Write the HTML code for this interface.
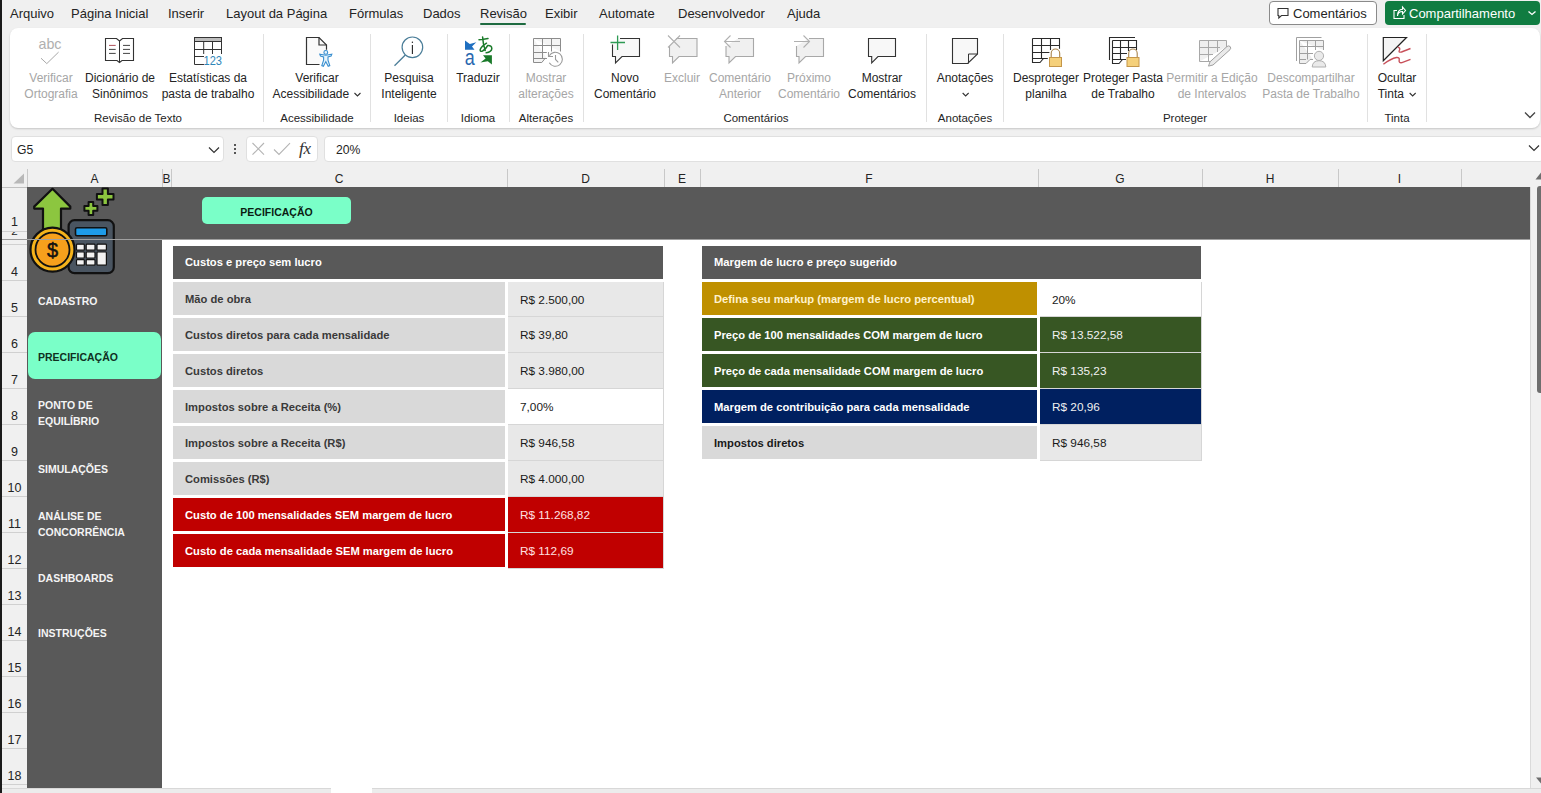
<!DOCTYPE html>
<html><head><meta charset="utf-8">
<style>
*{box-sizing:border-box;margin:0;padding:0}
html,body{width:1541px;height:793px;overflow:hidden;background:#f0f0f0;font-family:"Liberation Sans",sans-serif;position:relative}
.a{position:absolute}
.tab{position:absolute;top:6px;font-size:13px;color:#242424;white-space:nowrap}
#lb{left:0;top:0;width:2px;height:793px;background:#1a1a1a}
#ribbon{left:10px;top:28px;width:1530px;height:100px;background:#fff;border-radius:8px;box-shadow:0 1px 2px rgba(0,0,0,.18)}
.gl{position:absolute;top:112px;font-size:11.5px;color:#242424;white-space:nowrap;transform:translateX(-50%)}
.sep{position:absolute;top:34px;width:1px;height:88px;background:#e1e1e1}
.bt{position:absolute;top:70px;font-size:12px;line-height:16px;color:#242424;text-align:center;white-space:nowrap;transform:translateX(-50%)}
.dis{color:#a6a6a6}
.chev{display:inline-block;font-size:10px;transform:translateY(-3px)}
.ic{position:absolute;top:34px}
/* formula bar */
.fb{position:absolute;background:#fff;border:1px solid #e0e0e0;border-radius:4px}
/* headers */
.ch{position:absolute;top:170px;height:18px;font-size:12px;color:#242424;text-align:center;line-height:18px}
.chl{position:absolute;top:169px;width:1px;height:18px;background:#c8c8c8}
.rh{position:absolute;left:2px;width:25px;font-size:12px;color:#242424;text-align:center}
.rhl{position:absolute;left:2px;width:25px;height:1px;background:#c8c8c8}
.cell{position:absolute;font-weight:bold;font-size:11.2px;padding-left:12px;padding-top:1px;white-space:nowrap}
.val{position:absolute;font-size:11.8px;padding-left:12px;padding-top:0.5px;white-space:nowrap}
.nav{position:absolute;left:38px;font-size:10.5px;font-weight:bold;color:#f4f4f4;line-height:15.8px}
</style></head><body>
<div id="lb" class="a"></div>
<!-- tabs -->
<div class="tab" style="left:10px">Arquivo</div>
<div class="tab" style="left:71px">Página Inicial</div>
<div class="tab" style="left:168px">Inserir</div>
<div class="tab" style="left:226px">Layout da Página</div>
<div class="tab" style="left:349px">Fórmulas</div>
<div class="tab" style="left:423px">Dados</div>
<div class="tab" style="left:480px">Revisão</div>
<div class="a" style="left:480px;top:23px;width:46px;height:2px;background:#1e6b40;border-radius:1px"></div>
<div class="tab" style="left:545px">Exibir</div>
<div class="tab" style="left:599px">Automate</div>
<div class="tab" style="left:678px">Desenvolvedor</div>
<div class="tab" style="left:787px">Ajuda</div>

<div class="a" style="left:1269px;top:1px;width:108px;height:24px;background:#fff;border:1px solid #8a8a8a;border-radius:4px"></div>
<div class="tab" style="left:1293px;top:6px">Comentários</div>
<div class="a" style="left:1385px;top:1px;width:155px;height:24px;background:#107c41;border-radius:4px"></div>
<div class="tab" style="left:1409px;top:6px;color:#fff">Compartilhamento</div>

<svg class="a" style="left:1276px;top:5px" width="16" height="16" viewBox="0 0 16 16"><path d="M2 3.5 H12 V10.5 H5.5 L2.8 13 V10.5 H2 Z" fill="none" stroke="#333" stroke-width="1.1"/></svg>
<svg class="a" style="left:1391px;top:5px" width="16" height="16" viewBox="0 0 16 16"><path d="M6 5.5 H3 V13.5 H13 V10" fill="none" stroke="#fff" stroke-width="1.1"/><path d="M6.5 11 Q7 6.5 11.5 6.5 V9 L14.5 5.5 L11.5 2 V4.3 Q6.5 4.5 6.5 11 Z" fill="none" stroke="#fff" stroke-width="1.1"/></svg>
<svg class="a" style="left:1527px;top:10px" width="10" height="6" viewBox="0 0 10 6"><path d="M1.5 1.5 L5 4.5 L8.5 1.5" fill="none" stroke="#fff" stroke-width="1.3"/></svg>
<div id="ribbon" class="a"></div>
<svg class="a" style="left:0;top:0" width="1541" height="130" viewBox="0 0 1541 130">
<g fill="none" stroke-linejoin="miter">
<!-- abc check (disabled) -->
<text x="38.5" y="49" font-family="Liberation Sans" font-size="15" fill="#b0b0b0" stroke="none" textLength="23" lengthAdjust="spacingAndGlyphs">abc</text>
<path d="M41 58.2 L46.8 63.6 L58.6 52.1" stroke="#a8a8a8" stroke-width="1"/>
<!-- book -->
<path d="M105.5 38.5 H116.5 L119.5 41 L122.5 38.5 H133.5 V60.5 H122 L119.5 62.5 L117 60.5 H105.5 Z" stroke="#333" stroke-width="1.1" fill="#fff"/>
<path d="M119.5 41 V62" stroke="#333" stroke-width="1"/>
<path d="M109 45.4 H115.7" stroke="#b0505a" stroke-width="1"/>
<path d="M109 49.4 H115.7 M109 53.4 H115.7 M123 45.4 H130 M123 49.4 H130 M123 53.4 H130" stroke="#444" stroke-width="1"/>
<!-- stats grid -->
<rect x="194.5" y="37.5" width="27" height="4" fill="#bdbdbd" stroke="#333" stroke-width="1"/>
<path d="M194.5 41.5 V64.5 H204 M221.5 41.5 V54 M194.5 49.5 H221.5 M194.5 56.5 H204 M203.7 41.5 V54 M212.5 41.5 V54" stroke="#333" stroke-width="1"/>
<text x="203.5" y="64.8" font-family="Liberation Sans" font-size="13" fill="#2f86b8" stroke="none" textLength="18.5" lengthAdjust="spacingAndGlyphs">123</text>
<!-- accessibility doc -->
<path d="M319.5 64.5 H306.5 V37.5 H319 L326.5 45 V49.7" stroke="#333" stroke-width="1.2" fill="#fafafa"/>
<path d="M319 37.5 V45 H326.5" stroke="#333" stroke-width="1.2"/>
<circle cx="325.8" cy="52.4" r="1.9" stroke="#3a8fd0" stroke-width="1.1" fill="#e6f4fc"/><path d="M319.8 54.2 L320.5 56 L323.6 57 L323.6 60.2 L321.8 65.6 L323.4 66.3 L325.8 61.6 L328.2 66.3 L329.8 65.6 L328 60.2 L328 57 L331.1 56 L331.8 54.2 L325.8 55.2 Z" stroke="#3a8fd0" stroke-width="1.1" fill="#e6f4fc"/>
<!-- search -->
<circle cx="412.4" cy="47.3" r="10.3" stroke="#4a7d98" stroke-width="1.2"/>
<path d="M405.3 55 L394.5 65.8" stroke="#4a7d98" stroke-width="1.3"/>
<path d="M412.4 45 V54" stroke="#222" stroke-width="1.1"/>
<circle cx="412.4" cy="42.2" r="0.7" fill="#222" stroke="none"/>
<!-- translate -->
<path d="M465 40.4 L469.8 44 L476.3 42.3 L472 46.6 L474.5 49.7 H465 Z" fill="#1f6fc0" stroke="none"/>
<text x="464.8" y="64.6" font-family="Liberation Sans" font-size="22" fill="#2a68b0" stroke="none" textLength="10" lengthAdjust="spacingAndGlyphs">a</text>
<path d="M479 39.8 Q483.5 39.6 488 38.6 M482.6 37 Q483 44 485.2 50.6 M486.5 43.2 Q481.5 46.5 480.2 49.5 Q479.8 52.2 482.6 51 Q486 49 487.6 45.6 Q491.8 45.2 491.8 48.6 Q491.6 51.8 486.2 52.8" stroke="#1a7a2a" stroke-width="1.5" stroke-linecap="round" fill="none"/>
<path d="M483 55.2 H491.9 V64.6 L487.8 61.2 L480.5 62.6 L485.6 58.6 Z" fill="#1a7a2a" stroke="none"/>
<!-- mostrar alteracoes -->
<path d="M533.5 38.5 H560.5 V51.5 M533.5 38.5 V62.5 H541.8 L545 58.5 H546.8 M533.5 45.5 H560.5 M533.5 52.5 H546.8 M533.5 58.5 H546.8 M542.5 38.5 V58.5 M551.5 38.5 V51.5" stroke="#8c8c8c" stroke-width="1" fill="#f4f4f4"/>
<path d="M549.3 55.8 A7 7 0 1 1 549.3 62.8" stroke="#9a9a9a" stroke-width="1.1" fill="#fff"/>
<path d="M548.5 52 V56.5 H553 M555.5 55 V59.5 L558.3 62.3" stroke="#9a9a9a" stroke-width="1.1" fill="none"/>
<!-- novo comentario -->
<path d="M620 38.5 H639.5 V56.5 H622 L615.5 63 V56.5 H612.5 V44.5" stroke="#333" stroke-width="1.1" fill="#f8f8f8"/>
<path d="M617.6 35.5 V50 M610.5 42.5 H625" stroke="#2e9a54" stroke-width="1.3"/>
<!-- excluir -->
<path d="M676 38.5 H697 V56.5 H679 L672.5 63 V56.5 H669.5 V46" stroke="#a8a8a8" stroke-width="1.1" fill="#f0f0f0"/>
<path d="M668 35.5 L680 47.5 M680 35.5 L668 47.5" stroke="#b0b0b0" stroke-width="1.1"/>
<!-- anterior -->
<path d="M738 38.5 H753.5 V56.5 H735.5 L729 63 V56.5 H726 V46" stroke="#a8a8a8" stroke-width="1.1" fill="#f0f0f0"/>
<path d="M724.5 41.5 H740 M730.5 35.5 L724.5 41.5 L730.5 47.5" stroke="#b0b0b0" stroke-width="1.1"/>
<!-- proximo -->
<path d="M809 38.5 H823.5 V56.5 H805.5 L799 63 V56.5 H796.5 V46" stroke="#a8a8a8" stroke-width="1.1" fill="#f0f0f0"/>
<path d="M794 41.5 H809.5 M803.5 35.5 L809.5 41.5 L803.5 47.5" stroke="#b0b0b0" stroke-width="1.1"/>
<!-- mostrar comentarios -->
<path d="M868.5 38.5 H895.5 V56.5 H878 L871.7 62.8 V56.5 H868.5 Z" stroke="#333" stroke-width="1.1" fill="#f8f8f8"/>
<!-- anotacoes -->
<path d="M952.5 38.5 H977.5 V54 L967.7 63.5 H952.5 Z" stroke="#333" stroke-width="1.1" fill="#f8f8f8"/>
<path d="M977.5 54 H968.5 V63.5" stroke="#333" stroke-width="1"/>
<!-- desproteger -->
<path d="M1032.5 38.5 H1059.5 V48.8 M1032.5 38.5 V62.5 H1040 L1043.5 58.5 H1047.8 M1032.5 45.5 H1059.5 M1032.5 52.5 H1049.4 M1032.5 58.5 H1047.8 M1041.5 38.5 V58.5 M1050.5 38.5 V50" stroke="#2a2a2a" stroke-width="1.1" fill="#fff"/>
<path d="M1051.2 57.2 V53.3 A4.25 4.25 0 0 1 1059.7 53.3 V57.2" stroke="#a8834a" stroke-width="1.1" fill="none"/>
<rect x="1049.5" y="57.5" width="12" height="9" fill="#f5d07a" stroke="#c4964a" stroke-width="1"/>
<!-- proteger pasta -->
<path d="M1109.5 60 V37.5 H1135" stroke="#2a2a2a" stroke-width="1.1" fill="none"/>
<path d="M1112.5 40.5 H1136.5 V50 M1112.5 40.5 V63.5 H1119 L1122.5 59.5 H1126 M1112.5 47.5 H1136.5 M1112.5 53.5 H1127 M1112.5 59.5 H1126 M1120.5 40.5 V59.5 M1128.5 40.5 V51" stroke="#2a2a2a" stroke-width="1.1" fill="#fff"/>
<path d="M1128.7 57.2 V53.3 A4.25 4.25 0 0 1 1137.2 53.3 V57.2" stroke="#a8834a" stroke-width="1.1" fill="none"/>
<rect x="1127" y="57.5" width="12" height="9" fill="#f5d07a" stroke="#c4964a" stroke-width="1"/>
<!-- permitir -->
<path d="M1199.5 61.5 V40.5 H1226.5 V47 M1199.5 47.5 H1220 M1199.5 54.5 H1213 M1208.5 40.5 V61 M1217.5 40.5 V52 M1199.5 61.5 H1210" stroke="#a8a8a8" stroke-width="1" fill="#efefef"/>
<path d="M1208.5 66.1 L1210 61.8 L1227 46.5 Q1228.8 45.2 1230.2 46.6 Q1231.4 48.2 1230 49.7 L1213 65 Z" stroke="#a0a0a0" stroke-width="1" fill="#eaeaea"/>
<!-- descompartilhar -->
<path d="M1296.5 61 V37.5 H1321.5" stroke="#a0a0a0" stroke-width="1" fill="none"/>
<path d="M1299.5 40.5 H1323.5 V50 M1299.5 40.5 V63.5 H1306 L1310 59.5 H1313 M1299.5 46.5 H1323.5 M1299.5 53.5 H1313 M1299.5 59.5 H1306 M1307.5 40.5 V59.5 M1315.5 40.5 V50" stroke="#a0a0a0" stroke-width="1" fill="#efefef"/>
<circle cx="1319" cy="55.9" r="4.6" stroke="#b0b0b0" stroke-width="1" fill="#eaeaea"/>
<path d="M1312.2 67 Q1312.5 60.7 1319 60.7 Q1325.5 60.7 1325.8 67 Z" stroke="#b0b0b0" stroke-width="1" fill="#eaeaea"/>
<!-- tinta -->
<path d="M1383.3 37.5 H1406.5 L1383.3 60.7 Z" stroke="#222" stroke-width="1.2" fill="#f4f4f4"/>
<path d="M1397.8 47.2 Q1400.5 47.5 1399.5 50 Q1398 52.8 1401.5 52 L1410.5 48.5" stroke="#c8505a" stroke-width="1.4"/>
<path d="M1383.4 64.3 Q1391 58.5 1396.5 57.5 Q1399.8 57.2 1399.2 60 Q1398.5 63.2 1402 62.6 L1410.5 59.3" stroke="#c8505a" stroke-width="1.4"/>
</g>
</svg>

<!-- ribbon labels -->
<div class="bt dis" style="left:51px">Verificar<br>Ortografia</div>
<div class="bt" style="left:120px">Dicionário de<br>Sinônimos</div>
<div class="bt" style="left:208px">Estatísticas da<br>pasta de trabalho</div>
<div class="bt" style="left:317px">Verificar<br>Acessibilidade <svg width="8" height="5" viewBox="0 0 8 5" style="vertical-align:middle;margin-left:1px"><path d="M1 1 L4 4 L7 1" fill="none" stroke="#333" stroke-width="1.1"/></svg></div>
<div class="bt" style="left:409px">Pesquisa<br>Inteligente</div>
<div class="bt" style="left:478px">Traduzir</div>
<div class="bt dis" style="left:546px">Mostrar<br>alterações</div>
<div class="bt" style="left:625px">Novo<br>Comentário</div>
<div class="bt dis" style="left:682px">Excluir</div>
<div class="bt dis" style="left:740px">Comentário<br>Anterior</div>
<div class="bt dis" style="left:809px">Próximo<br>Comentário</div>
<div class="bt" style="left:882px">Mostrar<br>Comentários</div>
<div class="bt" style="left:965px">Anotações<br><svg width="8" height="5" viewBox="0 0 8 5" style="vertical-align:middle;margin-left:1px"><path d="M1 1 L4 4 L7 1" fill="none" stroke="#333" stroke-width="1.1"/></svg></div>
<div class="bt" style="left:1046px">Desproteger<br>planilha</div>
<div class="bt" style="left:1123px">Proteger Pasta<br>de Trabalho</div>
<div class="bt dis" style="left:1212px">Permitir a Edição<br>de Intervalos</div>
<div class="bt dis" style="left:1311px">Descompartilhar<br>Pasta de Trabalho</div>
<div class="bt" style="left:1397px">Ocultar<br>Tinta <svg width="8" height="5" viewBox="0 0 8 5" style="vertical-align:middle;margin-left:1px"><path d="M1 1 L4 4 L7 1" fill="none" stroke="#333" stroke-width="1.1"/></svg></div>
<!-- group labels -->
<div class="gl" style="left:138px">Revisão de Texto</div>
<div class="gl" style="left:317px">Acessibilidade</div>
<div class="gl" style="left:409px">Ideias</div>
<div class="gl" style="left:478px">Idioma</div>
<div class="gl" style="left:546px">Alterações</div>
<div class="gl" style="left:756px">Comentários</div>
<div class="gl" style="left:965px">Anotações</div>
<div class="gl" style="left:1185px">Proteger</div>
<div class="gl" style="left:1397px">Tinta</div>
<!-- separators -->
<div class="sep" style="left:263px"></div>
<div class="sep" style="left:370px"></div>
<div class="sep" style="left:447px"></div>
<div class="sep" style="left:509px"></div>
<div class="sep" style="left:583px"></div>
<div class="sep" style="left:926px"></div>
<div class="sep" style="left:1003px"></div>
<div class="sep" style="left:1367px"></div>
<div class="sep" style="left:1426px"></div>
<svg class="a" style="left:1524px;top:111px" width="12" height="8" viewBox="0 0 12 8"><path d="M1 1.5 L6 6.5 L11 1.5" fill="none" stroke="#444" stroke-width="1.3"/></svg>


<!-- formula bar -->
<div class="fb" style="left:11px;top:136px;width:213px;height:26px"></div>
<div class="a" style="left:17px;top:143px;font-size:12.2px;color:#242424">G5</div>
<div class="fb" style="left:246px;top:136px;width:72px;height:26px"></div>
<div class="fb" style="left:324px;top:136px;width:1220px;height:26px"></div>
<div class="a" style="left:336px;top:143px;font-size:12.2px;color:#242424">20%</div>

<!-- column headers -->
<div class="ch" style="left:27px;width:135px">A</div>
<div class="ch" style="left:162px;width:9px">B</div>
<div class="ch" style="left:171px;width:336px">C</div>
<div class="ch" style="left:507px;width:157px">D</div>
<div class="ch" style="left:664px;width:36px">E</div>
<div class="ch" style="left:700px;width:338px">F</div>
<div class="ch" style="left:1038px;width:164px">G</div>
<div class="ch" style="left:1202px;width:136px">H</div>
<div class="ch" style="left:1338px;width:123px">I</div>

<!-- grid area -->
<div class="a" style="left:27px;top:187px;width:1504px;height:601px;background:#fff"></div>
<div class="a" style="left:27px;top:187px;width:1503px;height:52px;background:#595959"></div>
<div class="a" style="left:27px;top:187px;width:135px;height:601px;background:#595959"></div>
<div class="a" style="left:2px;top:239px;width:1529px;height:1px;background:#9e9e9e"></div>

<!-- header decorations -->
<svg class="a" style="left:13px;top:173px" width="12" height="11" viewBox="0 0 12 11"><path d="M11 0.5 V10.5 H0.5 Z" fill="#b8b8b8"/></svg>
<div class="a" style="left:27px;top:169px;width:1px;height:18px;background:#c8c8c8"></div>
<div class="a" style="left:2px;top:187px;width:25px;height:1px;background:#c0c0c0"></div>
<div class="a" style="left:2px;top:231px;width:25px;height:8px;overflow:hidden"><div style="position:absolute;left:0;width:25px;top:-7px;text-align:center;font-size:11.7px;line-height:13px;color:#242424">2</div></div>
<div class="a" style="left:2px;top:231px;width:25px;height:1px;background:#d0d0d0"></div>
<div class="a" style="left:162px;top:169px;width:1px;height:18px;background:#c8c8c8"></div>
<div class="a" style="left:171px;top:169px;width:1px;height:18px;background:#c8c8c8"></div>
<div class="a" style="left:507px;top:169px;width:1px;height:18px;background:#c8c8c8"></div>
<div class="a" style="left:664px;top:169px;width:1px;height:18px;background:#c8c8c8"></div>
<div class="a" style="left:700px;top:169px;width:1px;height:18px;background:#c8c8c8"></div>
<div class="a" style="left:1038px;top:169px;width:1px;height:18px;background:#c8c8c8"></div>
<div class="a" style="left:1202px;top:169px;width:1px;height:18px;background:#c8c8c8"></div>
<div class="a" style="left:1338px;top:169px;width:1px;height:18px;background:#c8c8c8"></div>
<div class="a" style="left:1461px;top:169px;width:1px;height:18px;background:#c8c8c8"></div>
<svg class="a" style="left:208px;top:146px" width="12" height="8" viewBox="0 0 12 8"><path d="M1 1.5 L6 6.5 L11 1.5" fill="none" stroke="#333" stroke-width="1.2"/></svg>
<div class="a" style="left:234px;top:144px;width:2px;height:2px;background:#222;border-radius:1px"></div>
<div class="a" style="left:234px;top:148px;width:2px;height:2px;background:#222;border-radius:1px"></div>
<div class="a" style="left:234px;top:152px;width:2px;height:2px;background:#222;border-radius:1px"></div>
<svg class="a" style="left:250px;top:141px" width="70" height="18" viewBox="250 141 70 18"><path d="M252.5 143 L264 154.7 M264 143 L252.5 154.7" stroke="#b4b4b4" stroke-width="1.1" fill="none"/><path d="M274 149.5 L279 154.5 L290 143.2" stroke="#b4b4b4" stroke-width="1.1" fill="none"/></svg>
<div class="a" style="left:299px;top:138px;font-family:'Liberation Serif',serif;font-style:italic;font-size:17.5px;color:#333;letter-spacing:-0.5px">f<span style="font-size:17px">x</span></div>
<svg class="a" style="left:1528px;top:144px" width="12" height="8" viewBox="0 0 12 8"><path d="M1 1.5 L6 6.5 L11 1.5" fill="none" stroke="#333" stroke-width="1.2"/></svg>
<!-- scrollbar & bottom -->
<div class="a" style="left:1530px;top:187px;width:1px;height:601px;background:#dadada"></div>
<div class="a" style="left:1536.5px;top:186px;width:5px;height:207px;background:#6e6e6e;border-radius:3px 0 0 3px"></div>
<svg class="a" style="left:1535px;top:172px" width="6" height="8" viewBox="0 0 6 8"><path d="M6 0.5 L6 7.5 L0.5 7.5 Z" fill="#6e6e6e"/></svg>
<svg class="a" style="left:1536px;top:777px" width="5" height="7" viewBox="0 0 5 7"><path d="M0 0.5 L5 0.5 L5 6.5 Z" fill="#6e6e6e"/></svg>
<div class="a" style="left:2px;top:788px;width:1539px;height:5px;background:#ececec;border-top:1px solid #d8d8d8"></div>
<div class="a" style="left:331px;top:787px;width:41px;height:6px;background:#fff;border-radius:0 0 0 0"></div>
<!-- row headers -->
<div class="a" style="left:2px;top:231px;width:25px;height:1px;background:#d0d0d0"></div>
<div class="a" style="left:2px;top:239px;width:25px;height:1px;background:#9a9a9a"></div>
<div class="a" style="left:2px;top:244px;width:25px;height:1px;background:#d0d0d0"></div>
<div class="a" style="left:2px;top:280px;width:25px;height:1px;background:#d0d0d0"></div>
<div class="a" style="left:2px;top:316px;width:25px;height:1px;background:#d0d0d0"></div>
<div class="a" style="left:2px;top:352px;width:25px;height:1px;background:#d0d0d0"></div>
<div class="a" style="left:2px;top:388px;width:25px;height:1px;background:#d0d0d0"></div>
<div class="a" style="left:2px;top:424px;width:25px;height:1px;background:#d0d0d0"></div>
<div class="a" style="left:2px;top:460px;width:25px;height:1px;background:#d0d0d0"></div>
<div class="a" style="left:2px;top:496px;width:25px;height:1px;background:#d0d0d0"></div>
<div class="a" style="left:2px;top:532px;width:25px;height:1px;background:#d0d0d0"></div>
<div class="a" style="left:2px;top:568px;width:25px;height:1px;background:#d0d0d0"></div>
<div class="a" style="left:2px;top:604px;width:25px;height:1px;background:#d0d0d0"></div>
<div class="a" style="left:2px;top:640px;width:25px;height:1px;background:#d0d0d0"></div>
<div class="a" style="left:2px;top:676px;width:25px;height:1px;background:#d0d0d0"></div>
<div class="a" style="left:2px;top:712px;width:25px;height:1px;background:#d0d0d0"></div>
<div class="a" style="left:2px;top:748px;width:25px;height:1px;background:#d0d0d0"></div>
<div class="a" style="left:2px;top:784px;width:25px;height:1px;background:#d0d0d0"></div>
<div class="rh" style="top:216.3px;line-height:13px;font-size:12.5px">1</div>
<div class="rh" style="top:265.5px;line-height:13px;font-size:12.5px">4</div>
<div class="rh" style="top:301.5px;line-height:13px;font-size:12.5px">5</div>
<div class="rh" style="top:337.5px;line-height:13px;font-size:12.5px">6</div>
<div class="rh" style="top:373.5px;line-height:13px;font-size:12.5px">7</div>
<div class="rh" style="top:409.5px;line-height:13px;font-size:12.5px">8</div>
<div class="rh" style="top:445.5px;line-height:13px;font-size:12.5px">9</div>
<div class="rh" style="top:481.5px;line-height:13px;font-size:12.5px">10</div>
<div class="rh" style="top:517.5px;line-height:13px;font-size:12.5px">11</div>
<div class="rh" style="top:553.5px;line-height:13px;font-size:12.5px">12</div>
<div class="rh" style="top:589.5px;line-height:13px;font-size:12.5px">13</div>
<div class="rh" style="top:625.5px;line-height:13px;font-size:12.5px">14</div>
<div class="rh" style="top:661.5px;line-height:13px;font-size:12.5px">15</div>
<div class="rh" style="top:697.5px;line-height:13px;font-size:12.5px">16</div>
<div class="rh" style="top:733.5px;line-height:13px;font-size:12.5px">17</div>
<div class="rh" style="top:769.5px;line-height:13px;font-size:12.5px">18</div>
<!-- logo -->
<svg class="a" style="left:0;top:180px" width="130" height="100" viewBox="0 180 130 100">
<g stroke="#111" stroke-width="2.2" stroke-linejoin="round">
<path d="M52.5 188.8 L70.3 206.6 L70.3 208.6 L61 208.6 L61 232 L43 232 L43 208.6 L34.2 208.6 L34.2 206.6 Z" fill="#8cc63f"/>
<path d="M102.5 188.5 H107.9 V194.1 H113.5 V199.5 H107.9 V205.1 H102.5 V199.5 H96.9 V194.1 H102.5 Z" fill="#8cc63f" stroke-width="2"/>
<path d="M88.6 201.9 H93.2 V206.1 H97.4 V210.7 H93.2 V214.9 H88.6 V210.7 H84.4 V206.1 H88.6 Z" fill="#8cc63f" stroke-width="2"/>
<rect x="68.6" y="220.2" width="45.2" height="53" rx="6" fill="#4a5561"/>
<rect x="75.5" y="227.8" width="31.3" height="8" rx="1.5" fill="#1e9be8" stroke-width="1.6"/>
</g>
<g fill="#f2f2f2" stroke="#111" stroke-width="1.2">
<rect x="76.5" y="244.2" width="7.8" height="6" rx="0.8"/>
<rect x="86.2" y="244.2" width="8.8" height="6" rx="0.8"/>
<rect x="97" y="244.2" width="9.4" height="6" rx="0.8"/>
<rect x="76.5" y="252" width="7.8" height="6" rx="0.8"/>
<rect x="86.2" y="252" width="8.8" height="6" rx="0.8"/>
<rect x="97" y="252" width="9.4" height="13.2" rx="0.8"/>
<rect x="76.5" y="259.6" width="7.8" height="5.6" rx="0.8"/>
<rect x="86.2" y="259.6" width="8.8" height="5.6" rx="0.8"/>
</g>
<circle cx="52.5" cy="249.7" r="22" fill="#f5b31b" stroke="#111" stroke-width="2.2"/>
<circle cx="52.5" cy="249.7" r="17" fill="#f7a01c" stroke="#111" stroke-width="1.8"/>
<text x="52.5" y="257" text-anchor="middle" font-family="Liberation Sans" font-size="20" fill="#111" stroke="#111" stroke-width="0.5">$</text>
</svg>
<div class="a" style="left:27px;top:239px;width:1503px;height:1px;background:#a0a0a0"></div>
<!-- sidebar nav -->
<div class="a" style="left:28px;top:332px;width:133px;height:47px;background:#7affc8;border-radius:7px"></div>
<div class="nav" style="top:294px">CADASTRO</div>
<div class="nav" style="top:350px;color:#10301f">PRECIFICAÇÃO</div>
<div class="nav" style="top:398px">PONTO DE<br>EQUILÍBRIO</div>
<div class="nav" style="top:462px">SIMULAÇÕES</div>
<div class="nav" style="top:509px">ANÁLISE DE<br>CONCORRÊNCIA</div>
<div class="nav" style="top:571px">DASHBOARDS</div>
<div class="nav" style="top:626px">INSTRUÇÕES</div>
<!-- title button -->
<div class="a" style="left:202px;top:197px;width:149px;height:27px;background:#7affc8;border-radius:5px;line-height:27px;padding-top:2px;text-align:center;font-size:10.5px;font-weight:bold;color:#0b1d13">PECIFICAÇÃO</div>
<!-- left table -->
<div class="cell" style="left:173px;top:246px;width:490px;height:33px;line-height:32px;padding-top:0;background:#595959;color:#fff">Custos e preço sem lucro</div>
<div class="cell" style="left:702px;top:246px;width:499px;height:33px;line-height:32px;padding-top:0;background:#595959;color:#fff">Margem de lucro e preço sugerido</div>

<div class="cell" style="left:173px;top:282px;width:332px;height:33px;line-height:33px;background:#d9d9d9;color:#3a3a3a">Mão de obra</div>
<div class="val" style="left:508px;top:282px;width:156px;height:35px;line-height:34px;background:#e8e8e8;color:#1a1a1a;border-bottom:1px solid #d6d6d6;border-right:1px solid #d6d6d6">R$ 2.500,00</div>
<div class="cell" style="left:173px;top:318px;width:332px;height:33px;line-height:33px;background:#d9d9d9;color:#3a3a3a">Custos diretos para cada mensalidade</div>
<div class="val" style="left:508px;top:317px;width:156px;height:36px;line-height:35px;background:#e8e8e8;color:#1a1a1a;border-bottom:1px solid #d6d6d6;border-right:1px solid #d6d6d6">R$ 39,80</div>
<div class="cell" style="left:173px;top:354px;width:332px;height:33px;line-height:33px;background:#d9d9d9;color:#3a3a3a">Custos diretos</div>
<div class="val" style="left:508px;top:353px;width:156px;height:36px;line-height:35px;background:#e8e8e8;color:#1a1a1a;border-bottom:1px solid #d6d6d6;border-right:1px solid #d6d6d6">R$ 3.980,00</div>
<div class="cell" style="left:173px;top:390px;width:332px;height:33px;line-height:33px;background:#d9d9d9;color:#3a3a3a">Impostos sobre a Receita (%)</div>
<div class="val" style="left:508px;top:389px;width:156px;height:36px;line-height:35px;background:#ffffff;color:#1a1a1a;border-bottom:1px solid #d6d6d6;border-right:1px solid #d6d6d6">7,00%</div>
<div class="cell" style="left:173px;top:426px;width:332px;height:33px;line-height:33px;background:#d9d9d9;color:#3a3a3a">Impostos sobre a Receita (R$)</div>
<div class="val" style="left:508px;top:425px;width:156px;height:36px;line-height:35px;background:#e8e8e8;color:#1a1a1a;border-bottom:1px solid #d6d6d6;border-right:1px solid #d6d6d6">R$ 946,58</div>
<div class="cell" style="left:173px;top:462px;width:332px;height:33px;line-height:33px;background:#d9d9d9;color:#3a3a3a">Comissões (R$)</div>
<div class="val" style="left:508px;top:461px;width:156px;height:36px;line-height:35px;background:#e8e8e8;color:#1a1a1a;border-bottom:1px solid #d6d6d6;border-right:1px solid #d6d6d6">R$ 4.000,00</div>
<div class="cell" style="left:173px;top:498px;width:332px;height:33px;line-height:33px;background:#c00000;color:#ffffff">Custo de 100 mensalidades SEM margem de lucro</div>
<div class="val" style="left:508px;top:497px;width:156px;height:36px;line-height:35px;background:#c00000;color:#ffe0e0;border-bottom:1px solid #d6d6d6;border-right:1px solid #d6d6d6">R$ 11.268,82</div>
<div class="cell" style="left:173px;top:534px;width:332px;height:33px;line-height:33px;background:#c00000;color:#ffffff">Custo de cada mensalidade SEM margem de lucro</div>
<div class="val" style="left:508px;top:533px;width:156px;height:36px;line-height:35px;background:#c00000;color:#ffe0e0;border-bottom:1px solid #d6d6d6;border-right:1px solid #d6d6d6">R$ 112,69</div>
<div class="cell" style="left:702px;top:282px;width:335px;height:33px;line-height:33px;background:#bf9000;color:#fff2cc">Defina seu markup (margem de lucro percentual)</div>
<div class="val" style="left:1040px;top:282px;width:162px;height:35px;line-height:34px;background:#ffffff;color:#1a1a1a;border-bottom:1px solid #d6d6d6;border-right:1px solid #d6d6d6">20%</div>
<div class="cell" style="left:702px;top:318px;width:335px;height:33px;line-height:33px;background:#375623;color:#ffffff">Preço de 100 mensalidades COM margem de lucro</div>
<div class="val" style="left:1040px;top:317px;width:162px;height:36px;line-height:35px;background:#375623;color:#f0f0f0;border-bottom:1px solid #d6d6d6;border-right:1px solid #d6d6d6">R$ 13.522,58</div>
<div class="cell" style="left:702px;top:354px;width:335px;height:33px;line-height:33px;background:#375623;color:#ffffff">Preço de cada mensalidade COM margem de lucro</div>
<div class="val" style="left:1040px;top:353px;width:162px;height:36px;line-height:35px;background:#375623;color:#f0f0f0;border-bottom:1px solid #d6d6d6;border-right:1px solid #d6d6d6">R$ 135,23</div>
<div class="cell" style="left:702px;top:390px;width:335px;height:33px;line-height:33px;background:#002060;color:#ffffff">Margem de contribuição para cada mensalidade</div>
<div class="val" style="left:1040px;top:389px;width:162px;height:36px;line-height:35px;background:#002060;color:#f0f0f0;border-bottom:1px solid #d6d6d6;border-right:1px solid #d6d6d6">R$ 20,96</div>
<div class="cell" style="left:702px;top:426px;width:335px;height:33px;line-height:33px;background:#d9d9d9;color:#1a1a1a">Impostos diretos</div>
<div class="val" style="left:1040px;top:425px;width:162px;height:36px;line-height:35px;background:#e8e8e8;color:#1a1a1a;border-bottom:1px solid #d6d6d6;border-right:1px solid #d6d6d6">R$ 946,58</div>

</body></html>
